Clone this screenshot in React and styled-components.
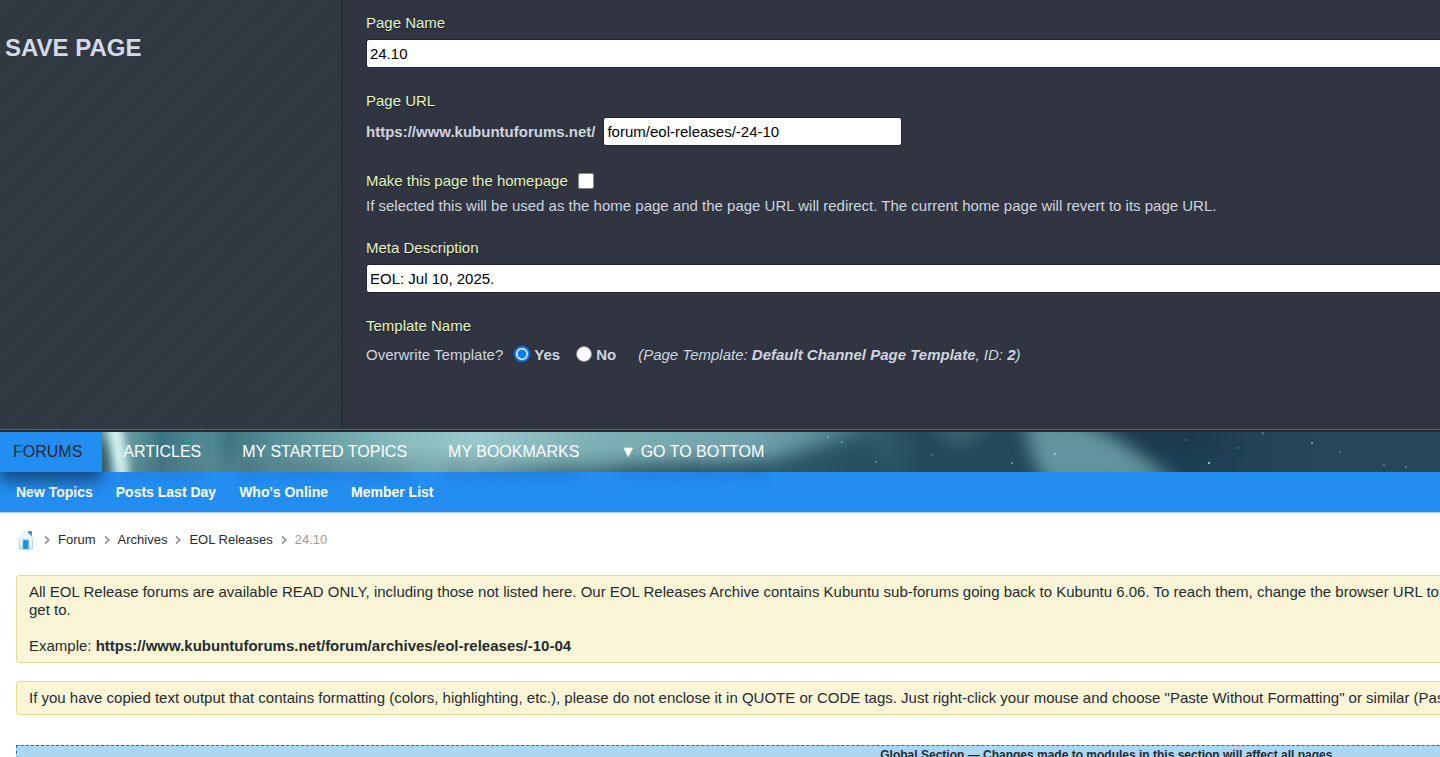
import { useState } from "react";
// Style
import styled, { createGlobalStyle } from "styled-components";

const NAV_LINKS = [
  "Articles",
  "My Started Topics",
  "My Bookmarks",
  "▼ Go To Bottom",
];
const SUB_LINKS = ["New Topics", "Posts Last Day", "Who's Online", "Member List"];
const CRUMBS = ["Forum", "Archives", "EOL Releases"];
const STARS = [
  [1055, 22, 0.9],
  [1012, 31, 0.6],
  [1209, 31, 0.9],
  [1312, 11, 0.6],
  [1186, 8, 0.3],
  [1263, 1, 0.4],
  [876, 30, 0.4],
  [828, 5, 0.5],
  [842, 10, 0.4],
  [932, 23, 0.3],
  [1384, 33, 0.4],
  [1406, 35, 0.4],
  [1340, 20, 0.3],
  [1238, 16, 0.3],
];

const AuroraBackdrop = () => (
  <Backdrop aria-hidden="true" viewBox="0 0 2216 40" preserveAspectRatio="xMinYMid slice">
    <defs>
      <linearGradient id="sky" gradientUnits="userSpaceOnUse" x1="0" x2="1440" y1="0" y2="0">
        <stop offset="0.07" stopColor="#5b8f95" />
        <stop offset="0.095" stopColor="#5d969d" />
        <stop offset="0.112" stopColor="#3a7382" />
        <stop offset="0.135" stopColor="#4f8893" />
        <stop offset="0.148" stopColor="#4d8691" />
        <stop offset="0.158" stopColor="#3f7583" />
        <stop offset="0.19" stopColor="#558e97" />
        <stop offset="0.24" stopColor="#71a9ad" />
        <stop offset="0.28" stopColor="#88bcbf" />
        <stop offset="0.33" stopColor="#98c8cb" />
        <stop offset="0.37" stopColor="#8abcc0" />
        <stop offset="0.42" stopColor="#7bafb5" />
        <stop offset="0.52" stopColor="#72a3ad" />
        <stop offset="0.565" stopColor="#5f919c" />
        <stop offset="0.61" stopColor="#325d6e" />
        <stop offset="0.64" stopColor="#24485c" />
        <stop offset="0.7" stopColor="#24485c" />
        <stop offset="0.8" stopColor="#1d3d51" />
        <stop offset="0.93" stopColor="#28475a" />
        <stop offset="1" stopColor="#264859" />
      </linearGradient>
      <linearGradient id="dusk" x1="0" x2="0" y1="0" y2="1">
        <stop offset="0.3" stopColor="#5f8991" stopOpacity="0" />
        <stop offset="1" stopColor="#5f8991" stopOpacity="0.5" />
      </linearGradient>
      <filter id="soft" x="-20%" y="-80%" width="140%" height="260%">
        <feGaussianBlur stdDeviation="9" />
      </filter>
      <filter id="fine" x="-100%" y="-50%" width="300%" height="200%">
        <feGaussianBlur stdDeviation="4" />
      </filter>
    </defs>
    <rect width="2216" height="40" fill="url(#sky)" />
    <rect width="700" height="40" fill="url(#dusk)" />
    <path d="M104 -16 L121 -16 L132 56 L117 56 Z" fill="#d3f1ef" filter="url(#fine)" />
    <path d="M98 12 L104 12 L110 56 L98 56 Z" fill="#3d6f78" filter="url(#fine)" />
    <path d="M470 56 L540 44 L620 36 L700 32 L770 28 L820 14 L870 4 L900 60 Z" fill="#22485b" opacity="0.85" filter="url(#soft)" />
    <path d="M920 -14 L1000 -14 L960 16 Z" fill="#3f7078" opacity="0.8" filter="url(#soft)" />
    <path d="M1022 -16 L1080 -12 L1122 10 L1178 50 L1050 56 L1034 30 Z" fill="#64949e" filter="url(#soft)" />
    <path d="M1110 -14 L1200 -14 L1230 20 L1170 18 Z" fill="#1b394e" opacity="0.7" filter="url(#soft)" />
    {STARS.map(([x, y, o]) => (
      <circle key={x} cx={x} cy={y} r="1.2" fill="#9cc4cf" opacity={o} />
    ))}
  </Backdrop>
);

const HouseIcon = () => (
  <svg width="20" height="20" viewBox="0 0 20 20" aria-hidden="true">
    <defs>
      <linearGradient id="wall" x1="0" x2="0" y1="0" y2="1">
        <stop offset="0" stopColor="#ffffff" />
        <stop offset="1" stopColor="#cfe6f4" />
      </linearGradient>
    </defs>
    <path d="M12 1h4v7l-4-4z" fill="#6f8ea3" />
    <path d="M3.500 9h13v10h-13z" fill="url(#wall)" stroke="#a9c8dd" strokeWidth="0.800" />
    <path d="M1 9.500 L8.500 2 q1.200-1 2.400 0 L19 9.500 q-.5 1-1.500.5 H2.500 q-1 .5-1.500-.5z" fill="#e6f5fc" stroke="#c3e0ef" strokeWidth="0.600" />
    <path d="M7 10h5.500v9H7z" fill="#1c93cf" stroke="#5cb9e4" strokeWidth="0.800" />
  </svg>
);

const Chevron = () => (
  <svg width="6" height="8" viewBox="0 0 6 8" aria-hidden="true">
    <path d="M1 0.500 L4.800 4 L1 7.500" fill="none" stroke="#8b8b8b" strokeWidth="1.600" />
  </svg>
);

const SavePageForm = () => {
  const [name, setName] = useState("24.10");
  const [url, setUrl] = useState("forum/eol-releases/-24-10");
  const [meta, setMeta] = useState("EOL: Jul 10, 2025.");

  return (
    <StyledForm onSubmit={(e) => e.preventDefault()}>
      <Field>
        <Label htmlFor="page-name">Page Name</Label>
        <TextInput id="page-name" value={name} onChange={(e) => setName(e.target.value)} />
      </Field>
      <Field>
        <Label htmlFor="page-url">Page URL</Label>
        <UrlRow>
          <b>https://www.kubuntuforums.net/</b>
          <TextInput id="page-url" $short value={url} onChange={(e) => setUrl(e.target.value)} />
        </UrlRow>
      </Field>
      <Field $gap={5}>
        <CheckRow>
          <Label htmlFor="homepage">Make this page the homepage</Label>
          <Checkbox id="homepage" type="checkbox" />
        </CheckRow>
        <p>
          If selected this will be used as the home page and the page URL will
          redirect. The current home page will revert to its page URL.
        </p>
      </Field>
      <Field>
        <Label htmlFor="meta">Meta Description</Label>
        <TextInput id="meta" value={meta} onChange={(e) => setMeta(e.target.value)} />
      </Field>
      <Field $gap={11}>
        <Label as="span">Template Name</Label>
        <TemplateRow>
          <span>Overwrite Template?</span>
          <RadioLabel>
            <Radio type="radio" name="overwrite" defaultChecked />
            Yes
          </RadioLabel>
          <RadioLabel>
            <Radio type="radio" name="overwrite" />
            No
          </RadioLabel>
          <i>
            (Page Template: <b>Default Channel Page Template</b>, ID: <b>2</b>)
          </i>
        </TemplateRow>
      </Field>
    </StyledForm>
  );
};

const App = () => {
  return (
    <>
      <GlobalStyle />
      <Page>
        <AdminPanel>
          <Sidebar>
            <h1>SAVE PAGE</h1>
          </Sidebar>
          <SavePageForm />
        </AdminPanel>
        <MainNav>
          <AuroraBackdrop />
          <NavLink href="#forums" $active>
            Forums
          </NavLink>
          {NAV_LINKS.map((link) => (
            <NavLink key={link} href="#nav">
              {link}
            </NavLink>
          ))}
        </MainNav>
        <SubNav>
          {SUB_LINKS.map((link) => (
            <a key={link} href="#sub">
              {link}
            </a>
          ))}
        </SubNav>
        <Content>
          <Breadcrumbs aria-label="Breadcrumb">
            <a href="#home" aria-label="Home">
              <HouseIcon />
            </a>
            <Chevron />
            {CRUMBS.map((crumb) => (
              <Crumb key={crumb}>
                <a href="#crumb">{crumb}</a>
                <Chevron />
              </Crumb>
            ))}
            <span>24.10</span>
          </Breadcrumbs>
          <Notice>
            <p>
              All EOL Release forums are available READ ONLY, including those not
              listed here. Our EOL Releases Archive contains Kubuntu sub-forums
              going back to Kubuntu 6.06. To reach them, change the browser URL
              to the version you want to
              <br />
              get to.
            </p>
            <p>
              Example:{" "}
              <b>https://www.kubuntuforums.net/forum/archives/eol-releases/-10-04</b>
            </p>
          </Notice>
          <Notice>
            <p>
              If you have copied text output that contains formatting (colors,
              highlighting, etc.), please do not enclose it in QUOTE or CODE tags.
              Just right-click your mouse and choose "Paste Without Formatting" or
              similar (Paste as Plain Text).
            </p>
          </Notice>
          <GlobalSection>
            Global Section — Changes made to modules in this section will affect
            all pages.
          </GlobalSection>
        </Content>
      </Page>
    </>
  );
};

export default App;

const GlobalStyle = createGlobalStyle`
  * {
    box-sizing: border-box;
  }
  body {
    margin: 0;
    overflow: hidden;
    background: white;
    color: #252c2f;
    font: 15px/18px "Liberation Sans", Arial, sans-serif;
  }
  h1, p {
    margin: 0;
  }
  a {
    color: inherit;
    text-decoration: none;
  }
`;

// the forum layout is wide and runs past smaller windows
const Page = styled.div`
  min-width: 2216px;
`;

const AdminPanel = styled.section`
  display: flex;
  min-height: 432px;
  border-bottom: 2px solid #262a31;
  box-shadow: inset 0 -1px #5c6064;
  background: #303541;
  color: #cfd4df;
`;

const Sidebar = styled.div`
  flex: 0 0 343px;
  margin-bottom: 1px;
  padding: 32px 5px;
  border-right: 2px solid #272e35;
  background: repeating-linear-gradient(
    135deg,
    #323b43 0 2px,
    #2f3841 3px 5px,
    #323b43 6px
  );

  h1 {
    color: #d5d9e6;
    font-size: 24px;
    line-height: 32px;
  }
`;

const StyledForm = styled.form`
  flex: 1;
  display: flex;
  flex-direction: column;
  gap: 24px;
  padding: 14px 23px 24px;
`;

const Field = styled.div`
  display: flex;
  flex-direction: column;
  align-items: flex-start;
  gap: ${({ $gap = 7 }) => $gap}px;
`;

const Label = styled.label`
  color: #e3f2c1;
  text-shadow: 0 1px 1px rgba(0, 0, 0, 0.4);
`;

const TextInput = styled.input`
  width: ${({ $short }) => ($short ? "299px" : "100%")};
  height: 29px;
  padding: 0 3px;
  border: 1px solid #20252d;
  border-radius: 3px;
  background: white;
  color: black;
  font: inherit;
`;

const UrlRow = styled.div`
  display: flex;
  align-items: center;
  gap: 8px;
`;

const CheckRow = styled.div`
  display: flex;
  align-items: center;
  gap: 10px;
  height: 22px;
`;

const Checkbox = styled.input`
  appearance: none;
  width: 16px;
  height: 16px;
  margin: 0;
  border: 1px solid #85878f;
  border-radius: 2px;
  background: white;
  &:checked {
    background: #0a7aff;
  }
`;

const TemplateRow = styled.div`
  display: flex;
  align-items: center;

  span {
    margin-right: 11px;
  }
`;

const RadioLabel = styled.label`
  display: flex;
  align-items: center;
  gap: 4px;
  margin-right: 16px;
  font-weight: bold;

  & + i {
    margin-left: 6px;
  }
`;

const Radio = styled.input`
  appearance: none;
  width: 16px;
  height: 16px;
  margin: 0 0 2px;
  border: 1px solid #85878f;
  border-radius: 50%;
  background: white;
  &:checked {
    border: 2px solid #0a7aff;
    background: radial-gradient(#0a7aff 4px, white 5px);
  }
`;

const MainNav = styled.nav`
  position: relative;
  display: flex;
  gap: 1px;
  height: 40px;
  background: #28475a;
`;

const Backdrop = styled.svg`
  position: absolute;
  inset: 0;
  width: 100%;
  height: 100%;
`;

const NavLink = styled.a`
  position: relative;
  padding: ${({ $active }) => ($active ? "0 20px 0 13px" : "0 20px")};
  background: ${({ $active }) => ($active ? "#248df2" : "none")};
  box-shadow: ${({ $active }) =>
    $active ? "0 10px 15px rgba(0, 0, 0, 0.45)" : "none"};
  color: ${({ $active }) => ($active ? "#1e2b38" : "white")};
  text-shadow: ${({ $active }) =>
    $active ? "none" : "0 20px 14px rgba(0, 0, 0, 0.3)"};
  font-size: 16px;
  line-height: 40px;
  text-transform: uppercase;
`;

const SubNav = styled.nav`
  display: flex;
  gap: 23px;
  padding: 0 16px;
  border-bottom: 1px solid #a9cff3;
  background: #248df2;
  color: white;
  font-size: 14px;
  font-weight: bold;
  line-height: 40px;
`;

const Content = styled.main`
  padding: 16px 16px 0;
`;

const Breadcrumbs = styled.nav`
  display: flex;
  align-items: center;
  gap: 8px;
  height: 22px;
  margin-bottom: 24px;
  font-size: 13px;

  svg {
    display: block;
  }
  > span {
    color: #9b9b9b;
  }
`;

const Crumb = styled.div`
  display: flex;
  align-items: center;
  gap: 8px;
`;

const Notice = styled.section`
  margin-bottom: 18px;
  padding: 7px 12px;
  border: 1px solid #e8d88c;
  border-radius: 3px;
  background: #fbf5d8;

  p + p {
    margin-top: 18px;
  }
`;

const GlobalSection = styled.section`
  margin-top: 30px;
  border: 1px dashed #1f72b0;
  background: #aed6f1;
  font-size: 12px;
  font-weight: bold;
  text-align: center;
`;
